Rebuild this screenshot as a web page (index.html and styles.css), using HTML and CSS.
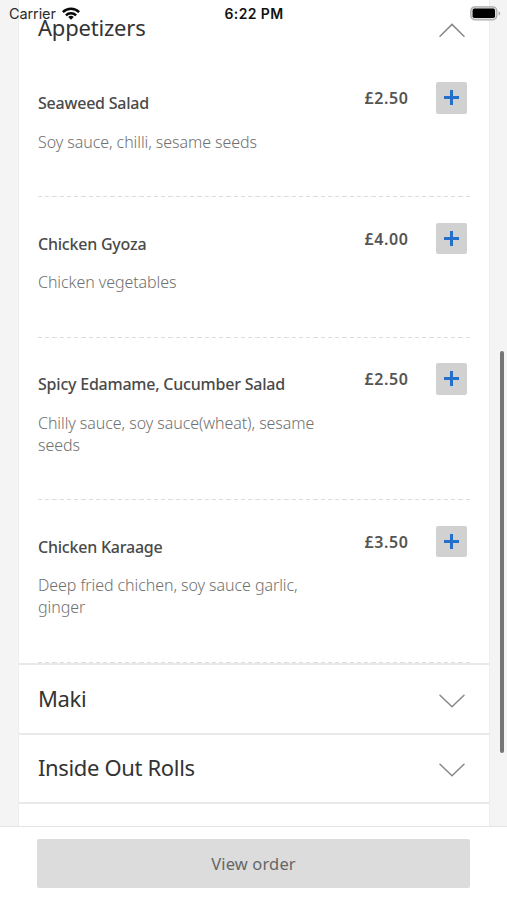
FILE: index.html
```html
<!DOCTYPE html>
<html lang="en">
<head>
<meta charset="utf-8">
<title>Menu</title>
<link rel="stylesheet" href="styles.css">
</head>
<body>
<div class="app">
  <header class="status">
    <div class="carrier"><span class="carrier-name">Carrier</span>
      <svg class="wifi" viewBox="0 0 18 13" width="18" height="13"><g fill="none" stroke="#080808" stroke-width="2.5"><path d="M.9 5.1a11.6 11.6 0 0 1 16.2 0"/><path d="M3.9 8.3a7.3 7.3 0 0 1 10.2 0"/></g><path d="M9 12.8 6.2 10a4 4 0 0 1 5.6 0Z" fill="#080808"/></svg>
    </div>
    <div class="clock">6:22 PM</div>
    <svg class="battery" viewBox="0 0 31 15" width="31" height="15"><rect x=".8" y=".8" width="26" height="13" rx="4" fill="#ddd" stroke="#aaa" stroke-width="1.2"/><rect x="2.6" y="2.6" width="22.4" height="9.4" rx="1.8" fill="#000"/><path d="M28.6 5.2c2.2.9 2.2 3.5 0 4.4Z" fill="#aaa"/></svg>
  </header>
  <main class="scroll">
    <section class="card">
      <div class="heading first"><h2>Appetizers</h2><svg class="chevron" viewBox="0 0 28 16" width="28" height="16"><path d="M2 14.2 14 2.4l12 11.8"/></svg></div>
      <ul class="items">
        <li class="item"><div class="info"><h3>Seaweed Salad</h3><p>Soy sauce, chilli, sesame seeds</p></div><span class="price">£2.50</span><button class="add" aria-label="Add"></button></li>
        <li class="item"><div class="info"><h3>Chicken Gyoza</h3><p>Chicken vegetables</p></div><span class="price">£4.00</span><button class="add" aria-label="Add"></button></li>
        <li class="item"><div class="info"><h3>Spicy Edamame, Cucumber Salad</h3><p>Chilly sauce, soy sauce(wheat), sesame<br>seeds</p></div><span class="price">£2.50</span><button class="add" aria-label="Add"></button></li>
        <li class="item"><div class="info"><h3>Chicken Karaage</h3><p>Deep fried chichen, soy sauce garlic,<br>ginger</p></div><span class="price">£3.50</span><button class="add" aria-label="Add"></button></li>
      </ul>
      <div class="heading"><h2>Maki</h2><svg class="chevron" viewBox="0 0 28 16" width="28" height="16"><path d="M2 2.2 14 13.8 26 2.2"/></svg></div>
      <div class="heading"><h2>Inside Out Rolls</h2><svg class="chevron" viewBox="0 0 28 16" width="28" height="16"><path d="M2 2.2 14 13.8 26 2.2"/></svg></div>
      <div class="heading"></div>
    </section>
    <div class="thumb"></div>
  </main>
  <footer class="footer"><button class="order">View order</button></footer>
</div>
</body>
</html>
```
FILE: styles.css
```css
* { box-sizing: border-box; margin: 0; padding: 0; }
body { background: #fff; font-family: "Noto Sans", sans-serif; }
.app { position: relative; height: 900px; overflow: hidden; display: flex; flex-direction: column; }
.status { position: absolute; z-index: 2; top: 0; left: 0; right: 0; height: 27px; display: grid; grid-template-columns: 1fr auto 1fr; align-items: center; padding: 0 6px 0 9px; color: #111; font: 14.5px/27px Inter, sans-serif; }
.carrier { display: flex; align-items: center; gap: 6px; }
.carrier-name { color: #2a2a2a; letter-spacing: -.1px; }
.wifi { margin-top: -1px; }
.clock { font-weight: 600; font-size: 14px; letter-spacing: .4px; margin-right: 2px; }
.battery { justify-self: end; margin-top: -1px; }
.scroll { height: 826px; background: #f4f4f4; padding: 0 17px 0 18px; overflow: hidden; position: relative; }
.card { height: 100%; background: #fff; border: solid #eee; border-width: 0 1px; overflow: hidden; }
.heading { height: 69.5px; border-top: 2px solid #e9e9e9; padding: 0 23px 0 19px; display: flex; align-items: center; justify-content: space-between; }
.heading.first { height: 57px; border: 0; }
h2 { font-weight: 400; font-size: 22px; line-height: 30px; color: #333; letter-spacing: -.35px; margin-top: -2px; }
.first h2 { margin-top: -4px; letter-spacing: -.2px; }
.chevron { fill: none; stroke: #888; stroke-width: 1.5; stroke-linecap: round; margin-top: 4px; }
.first .chevron { margin-top: 3px; }
.items { list-style: none; padding: 0 19px; }
.item { display: grid; grid-template-columns: 1fr auto 31px; align-items: start; padding: 25px 3px 44px 0; background: repeating-linear-gradient(90deg, #ddd 0 4.2px, transparent 4.2px 7.25px) 0 100% / 100% 1.3px no-repeat; }
h3 { font-weight: 500; font-size: 16px; line-height: 22px; color: #4a4a4a; margin-top: 10px; white-space: nowrap; letter-spacing: -.22px; }
.info p { font-weight: 350; font-size: 16px; line-height: 22px; color: #707070; margin-top: 17.5px; white-space: nowrap; letter-spacing: -.07px; transform: translateY(-.6px); }
.price { font-weight: 600; font-size: 16px; line-height: 22px; color: #555; margin: 5px 27.5px 0 0; letter-spacing: .6px; }
.add { width: 31px; height: 31.5px; border: 0; border-radius: 2px; background: linear-gradient(#2470c8, #2470c8) center / 15px 3px no-repeat, linear-gradient(#2470c8, #2470c8) center / 3px 15px no-repeat, #d1d1d1; }
.thumb { position: absolute; right: 3.5px; top: 351px; width: 4px; height: 402px; border-radius: 2px; background: #757575; }
.footer { height: 74px; border-top: 1px solid #e4e4e4; background: #fff; padding: 12px 37px; }
.order { display: block; width: 433px; height: 49px; border: 0; border-radius: 2px; background: #dcdcdc; color: #666; font: 16.5px/49px "Noto Sans", sans-serif; letter-spacing: .15px; }
```
